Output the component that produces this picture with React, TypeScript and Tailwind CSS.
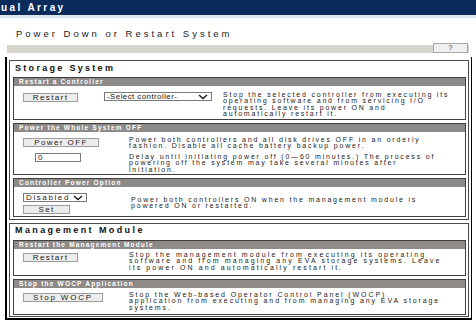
import React from "react";

const txt = "text-[7px] leading-[6.4px] text-[#1a1a1a] whitespace-nowrap";

const Lines = ({ lines, className }: { lines: string[]; className: string }) => (
    <div className={`${txt} ${className}`}>
        {lines.map((l) => (
            <div key={l}>{l}</div>
        ))}
    </div>
);

const Btn = ({ label, className }: { label: string; className: string }) => (
    <div className={`flex h-[9px] shrink-0 items-center justify-center border border-[#9c9c9c] bg-[#ececec] text-[8px] leading-none tracking-[1.4px] text-[#222] ${className}`}>
        {label}
    </div>
);

// little chevron used by the fake selects
const Chevron = () => (
    <svg width="10" height="6" viewBox="0 0 10 6" className="shrink-0">
        <polyline points="1,1 5,4.5 9,1" fill="none" stroke="#222" strokeWidth="1.6" />
    </svg>
);

const Select = ({ label, className }: { label: string; className: string }) => (
    <div className={`flex h-[9px] shrink-0 items-center justify-between border border-[#7a7a7a] bg-white pl-[2px] pr-[3px] text-[8px] leading-none text-[#222] ${className}`}>
        <span>{label}</span>
        <Chevron />
    </div>
);

const Panel = ({ title, className, children }: { title: string; className: string; children: React.ReactNode }) => (
    <div className={`ml-[3px] mr-[2px] border border-[#404040] ${className}`}>
        <div className="h-[8px] whitespace-nowrap bg-[#8d8a87] pl-[5px] text-[6.5px] font-bold leading-[8px] tracking-[1.2px] text-white">
            {title}
        </div>
        {children}
    </div>
);

const App = () => {
    return (
        <div className="h-[326px] w-[476px] overflow-hidden bg-white font-['Liberation_Sans',Arial,sans-serif]">
            {/* top title bar */}
            <div className="h-[15px] whitespace-nowrap bg-[#0b2b5c] pl-[1px] text-[10px] font-bold leading-[16px] tracking-[2.4px] text-white">
                ual Array
            </div>
            <div className="h-[3px] bg-[#dde6ec]" />

            <div className="whitespace-nowrap pb-[5px] pl-[16px] pt-[10px] text-[9.5px] leading-[12px] tracking-[3px] text-[#222]">
                Power Down or Restart System
            </div>

            {/* toolbar with help button */}
            <div className="ml-[7px] flex h-[8px] w-[462px] items-end justify-end bg-[#d6d3ce]">
                <div className="mr-[1px] flex h-[10px] w-[35px] shrink-0 items-center justify-center border border-[#a8a8a8] bg-[#efefef] text-[7px] text-[#333]">
                    ?
                </div>
            </div>

            <div className="ml-[5px] mt-[4px] w-[467px] border-b-2 border-l-2 border-r border-black px-[2px] pb-[1px] pt-[3px]">
                {/* Storage System */}
                <div className="border border-[#4a4a4a] pb-[2px]">
                    <div className="flex h-[16px] items-center pb-[1px] pl-[5px] text-[9px] font-bold tracking-[2.3px] text-[#111]">
                        Storage System
                    </div>

                    <Panel title="Restart a Controller" className="">
                        <div className="flex h-[33px] items-start pl-[9px]">
                            <Btn label="Restart" className="mt-[7px] w-[55px]" />
                            <Select label="-Select controller-" className="ml-[26px] mt-[6px] w-[108px] tracking-[0.4px]" />
                            <Lines
                                className="ml-[11px] mt-[6px] tracking-[1.8px]"
                                lines={[
                                    "Stop the selected controller from executing its",
                                    "operating software and from servicing I/O",
                                    "requests. Leave its power ON and",
                                    "automatically restart it.",
                                ]}
                            />
                        </div>
                    </Panel>

                    <Panel title="Power the Whole System OFF" className="mt-[3px]">
                        <div className="flex h-[42px] items-start pl-[9px]">
                            <div className="flex flex-col">
                                <Btn label="Power OFF" className="mt-[6px] w-[76px]" />
                                <div className="ml-[12px] mt-[6px] flex h-[9px] w-[46px] items-center border border-[#7a7a7a] bg-white pl-[2px] text-[8px] leading-none text-[#222]">
                                    0
                                </div>
                            </div>
                            <div className="ml-[30px] mt-[5px] flex flex-col gap-[4px]">
                                <Lines
                                    className="tracking-[1.8px]"
                                    lines={[
                                        "Power both controllers and all disk drives OFF in an orderly",
                                        "fashion. Disable all cache battery backup power.",
                                    ]}
                                />
                                <Lines
                                    className="tracking-[1.8px]"
                                    lines={[
                                        "Delay until initiating power off (0\u201460 minutes.) The process of",
                                        "powering off the system may take several minutes after",
                                        "initiation.",
                                    ]}
                                />
                            </div>
                        </div>
                    </Panel>

                    <Panel title="Controller Power Option" className="mt-[3px]">
                        <div className="flex h-[29px] items-start pl-[9px]">
                            <div className="flex flex-col">
                                <Select label="Disabled" className="mt-[6px] w-[64px] tracking-[1.6px]" />
                                <Btn label="Set" className="mt-[3px] w-[47px]" />
                            </div>
                            <Lines
                                className="ml-[44px] mt-[10px] tracking-[1.8px]"
                                lines={["Power both controllers ON when the management module is", "powered ON or restarted."]}
                            />
                        </div>
                    </Panel>
                </div>

                {/* Management Module */}
                <div className="mt-[3px] border border-[#4a4a4a] pb-[1px]">
                    <div className="h-[16px] pl-[5px] pt-[1px] text-[9px] font-bold leading-[10px] tracking-[2.4px] text-[#111]">
                        Management Module
                    </div>

                    <Panel title="Restart the Management Module" className="">
                        <div className="flex h-[26px] items-start pl-[9px]">
                            <Btn label="Restart" className="mt-[4px] w-[55px]" />
                            <Lines
                                className="ml-[51px] mt-[3px] tracking-[2.1px]"
                                lines={[
                                    "Stop the management module from executing its operating",
                                    "software and from managing any EVA storage systems. Leave",
                                    "its power ON and automatically restart it.",
                                ]}
                            />
                        </div>
                    </Panel>

                    <Panel title="Stop the WOCP Application" className="mt-[3px]">
                        <div className="flex h-[26px] items-start pl-[9px]">
                            <Btn label="Stop WOCP" className="mt-[5px] w-[80px] tracking-[1.8px]" />
                            <Lines
                                className="ml-[26px] mt-[4px] tracking-[1.9px]"
                                lines={[
                                    "Stop the Web-based Operator Control Panel (WOCP)",
                                    "application from executing and from managing any EVA storage",
                                    "systems.",
                                ]}
                            />
                        </div>
                    </Panel>
                </div>
            </div>
        </div>
    );
};

export default App;
